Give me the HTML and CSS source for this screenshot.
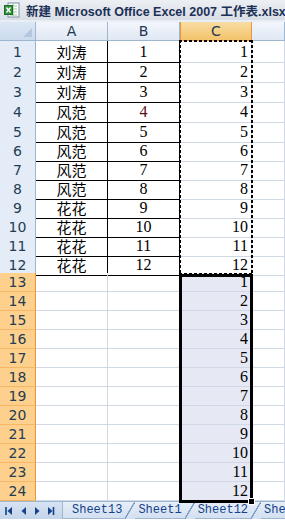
FILE: index.html
```html
<!DOCTYPE html>
<html lang="zh-CN">
<head>
    <meta charset="UTF-8">
    <title>新建 Microsoft Office Excel 2007 工作表.xlsx</title>
    <link rel="stylesheet" href="styles.css">
</head>
<body>

    <div class="titlebar">
        <svg class="app-icon" width="16" height="16" viewBox="0 0 16 16">
            <rect x="4" y="1" width="11" height="14" fill="#fff" stroke="#7a8fa8"/>
            <path d="M6 4h7M6 7h7M6 10h7M6 13h7M9 2v12" stroke="#9cc89a" stroke-width="1"/>
            <rect x="0.5" y="3.5" width="8" height="9" fill="#2f8f3a" stroke="#1f6a28"/>
            <path d="M2.5 5.5l4 5M6.5 5.5l-4 5" stroke="#fff" stroke-width="1.4"/>
        </svg>
        <span class="title-text">新建 Microsoft Office Excel 2007 工作表.xlsx</span>
    </div>
    <div class="titlebar-gap"></div>

    <div class="sheet">
        <div class="row head">
            <div class="corner"><span class="corner-tri"></span></div>
            <div class="ch">A</div>
            <div class="ch">B</div>
            <div class="ch active">C</div>
            <div class="ch"></div>
        </div>

        <div class="row tall"><div class="rh">1</div><div class="c t">刘涛</div><div class="c t num">1</div><div class="c val">1</div><div class="c"></div></div>
        <div class="row tall"><div class="rh">2</div><div class="c t">刘涛</div><div class="c t num">2</div><div class="c val">2</div><div class="c"></div></div>
        <div class="row tall"><div class="rh">3</div><div class="c t">刘涛</div><div class="c t num">3</div><div class="c val">3</div><div class="c"></div></div>
        <div class="row tall"><div class="rh">4</div><div class="c t">风范</div><div class="c t num red">4</div><div class="c val">4</div><div class="c"></div></div>
        <div class="row"><div class="rh">5</div><div class="c t">风范</div><div class="c t num">5</div><div class="c val">5</div><div class="c"></div></div>
        <div class="row"><div class="rh">6</div><div class="c t">风范</div><div class="c t num">6</div><div class="c val">6</div><div class="c"></div></div>
        <div class="row"><div class="rh">7</div><div class="c t">风范</div><div class="c t num">7</div><div class="c val">7</div><div class="c"></div></div>
        <div class="row"><div class="rh">8</div><div class="c t">风范</div><div class="c t num">8</div><div class="c val">8</div><div class="c"></div></div>
        <div class="row"><div class="rh">9</div><div class="c t">花花</div><div class="c t num">9</div><div class="c val">9</div><div class="c"></div></div>
        <div class="row"><div class="rh">10</div><div class="c t">花花</div><div class="c t num">10</div><div class="c val">10</div><div class="c"></div></div>
        <div class="row"><div class="rh">11</div><div class="c t">花花</div><div class="c t num">11</div><div class="c val">11</div><div class="c"></div></div>
        <div class="row"><div class="rh">12</div><div class="c t">花花</div><div class="c t num">12</div><div class="c val">12</div><div class="c"></div></div>

        <div class="row"><div class="rh sel">13</div><div class="c"></div><div class="c"></div><div class="c val fill">1</div><div class="c"></div></div>
        <div class="row"><div class="rh sel">14</div><div class="c"></div><div class="c"></div><div class="c val fill">2</div><div class="c"></div></div>
        <div class="row"><div class="rh sel">15</div><div class="c"></div><div class="c"></div><div class="c val fill">3</div><div class="c"></div></div>
        <div class="row"><div class="rh sel">16</div><div class="c"></div><div class="c"></div><div class="c val fill">4</div><div class="c"></div></div>
        <div class="row"><div class="rh sel">17</div><div class="c"></div><div class="c"></div><div class="c val fill">5</div><div class="c"></div></div>
        <div class="row"><div class="rh sel">18</div><div class="c"></div><div class="c"></div><div class="c val fill">6</div><div class="c"></div></div>
        <div class="row"><div class="rh sel">19</div><div class="c"></div><div class="c"></div><div class="c val fill">7</div><div class="c"></div></div>
        <div class="row"><div class="rh sel">20</div><div class="c"></div><div class="c"></div><div class="c val fill">8</div><div class="c"></div></div>
        <div class="row"><div class="rh sel">21</div><div class="c"></div><div class="c"></div><div class="c val fill">9</div><div class="c"></div></div>
        <div class="row"><div class="rh sel">22</div><div class="c"></div><div class="c"></div><div class="c val fill">10</div><div class="c"></div></div>
        <div class="row"><div class="rh sel">23</div><div class="c"></div><div class="c"></div><div class="c val fill">11</div><div class="c"></div></div>
        <div class="row"><div class="rh sel">24</div><div class="c"></div><div class="c"></div><div class="c val fill">12</div><div class="c"></div></div>

        <!-- copy marquee and selection drawn over the cells -->
        <div class="copy-box"></div>
        <div class="sel-box"><span class="fill-handle"></span></div>
    </div>

    <div class="tabbar">
        <div class="nav">
            <svg width="58" height="18" viewBox="0 0 58 18">
                <path d="M6 5v8" stroke="#15428b" stroke-width="1.6"/>
                <path d="M12 5l-4.5 4 4.5 4z" fill="#15428b"/>
                <path d="M26 5l-4.5 4 4.5 4z" fill="#15428b"/>
                <path d="M35 5l4.5 4-4.5 4z" fill="#15428b"/>
                <path d="M48 5l4.5 4-4.5 4z" fill="#15428b"/>
                <path d="M53.5 5v8" stroke="#15428b" stroke-width="1.6"/>
            </svg>
        </div>
        <div class="tabs">
            <span class="tab first">Sheet13</span>
            <span class="slant"></span>
            <span class="tab">Sheet1</span>
            <span class="slant"></span>
            <span class="tab">Sheet12</span>
            <span class="slant"></span>
            <span class="tab">Shee</span>
        </div>
    </div>

</body>
</html>
```

FILE: styles.css
```css
body {
    margin: 0;
    width: 285px;
    height: 520px;
    overflow: hidden;
    background-color: #fff;
    font-family: 'DejaVu Sans', sans-serif;
}

/* Title bar */
.titlebar {
    height: 20px;
    display: flex;
    align-items: center;
    gap: 6px;
    padding-left: 4px;
    background: linear-gradient(#eceff3, #d9dee6);
    white-space: nowrap;
    overflow: hidden;
}

.app-icon {
    flex: none;
}

.title-text {
    font-family: 'Liberation Sans', 'Noto Sans CJK SC', sans-serif;
    font-weight: bold;
    font-size: 12.5px;
    color: #1b3056;
}

.titlebar-gap {
    height: 2px;
    background-color: #e9eef6;
}

/* Grid */
.sheet {
    position: relative;
}

.row {
    display: grid;
    grid-template-columns: 36px 72px 72px 72px 33px;
    height: 19px;
}

.row.tall {
    height: 20px;
}

.row.head {
    height: 19px;
}

.corner,
.ch {
    background: linear-gradient(#f3f6fb, #dfe8f4);
    border-right: 1px solid #9eb6ce;
    border-bottom: 1px solid #9eb6ce;
    box-sizing: border-box;
    display: flex;
    align-items: center;
    justify-content: center;
    font-size: 14px;
    color: #1f3551;
}

.corner {
    position: relative;
    background: linear-gradient(#dde7f4, #cbdaee);
}

.corner-tri {
    position: absolute;
    right: 3px;
    bottom: 3px;
    width: 0;
    height: 0;
    border-left: 9px solid transparent;
    border-bottom: 9px solid #b4c7e0;
}

.ch.active {
    background: linear-gradient(#f9dca4, #f2c36a);
    border-left: 1px solid #f29436;
    border-right: 1px solid #f29436;
    border-bottom: 1px solid #f29436;
}

.rh {
    background-color: #e4ecf7;
    border-right: 1px solid #9eb6ce;
    border-bottom: 1px solid #9eb6ce;
    box-sizing: border-box;
    display: flex;
    align-items: center;
    justify-content: center;
    font-size: 14px;
    color: #253d52;
}

.rh.sel {
    background-color: #fdd08d;
    border-right: 1px solid #f29436;
    border-bottom: 1px solid #f7b665;
}

.c {
    border-right: 1px solid #d0d7e5;
    border-bottom: 1px solid #d0d7e5;
    box-sizing: border-box;
    display: flex;
    align-items: center;
    font-family: 'Liberation Serif', 'Noto Sans CJK SC', serif;
    font-size: 16px;
    color: #000;
}

.c.t {
    justify-content: center;
    border-right-color: #000;
    border-bottom-color: #000;
    font-family: 'Noto Sans CJK SC', sans-serif;
    font-size: 15px;
}

.c.num {
    font-family: 'Liberation Serif', serif;
    font-size: 16px;
}

.c.red {
    color: #5a1410;
}

.c.val {
    justify-content: flex-end;
    padding-right: 3px;
}

.c.fill {
    background-color: #e6e8f3;
}

/* Copy marquee over C1:C12 */
.copy-box {
    position: absolute;
    left: 179px;
    top: 18px;
    width: 74px;
    height: 235px;
    background:
        repeating-linear-gradient(90deg, #000 0 3px, transparent 3px 5px) left top / 100% 2px no-repeat,
        repeating-linear-gradient(90deg, #000 0 3px, transparent 3px 5px) left bottom / 100% 2px no-repeat,
        repeating-linear-gradient(180deg, #000 0 3px, transparent 3px 5px) left top / 2px 100% no-repeat,
        repeating-linear-gradient(180deg, #000 0 3px, transparent 3px 5px) right top / 2px 100% no-repeat;
}

/* Selected range C13:C24 */
.sel-box {
    position: absolute;
    left: 179px;
    top: 252px;
    width: 74px;
    height: 229px;
    box-sizing: border-box;
    border: 3px solid #000;
}

.fill-handle {
    position: absolute;
    right: -5px;
    bottom: -5px;
    width: 5px;
    height: 5px;
    background-color: #000;
    border: 1px solid #fff;
}

/* Sheet tabs */
.tabbar {
    display: flex;
    height: 18px;
    background: linear-gradient(#d7e3f3, #c4d4ea);
    border-top: 1px solid #9eb6ce;
    box-sizing: border-box;
    white-space: nowrap;
    overflow: hidden;
}

.nav {
    width: 62px;
    flex: none;
    border-right: 1px solid #9eb6ce;
    display: flex;
    align-items: center;
}

.tabs {
    display: flex;
    align-items: stretch;
    font-family: 'Liberation Mono', monospace;
    font-size: 12px;
    color: #15428b;
}

.tab {
    display: flex;
    align-items: center;
    padding: 0 3px;
    background: linear-gradient(#e6eef9, #d3e0f1);
    border-bottom: 1px solid #9eb6ce;
}

.tab.first {
    padding-left: 9px;
}

.slant {
    width: 10px;
    background: linear-gradient(to top left, transparent 46%, #7f9cc2 48%, #7f9cc2 54%, transparent 56%),
                linear-gradient(#e6eef9, #d3e0f1);
}
```
